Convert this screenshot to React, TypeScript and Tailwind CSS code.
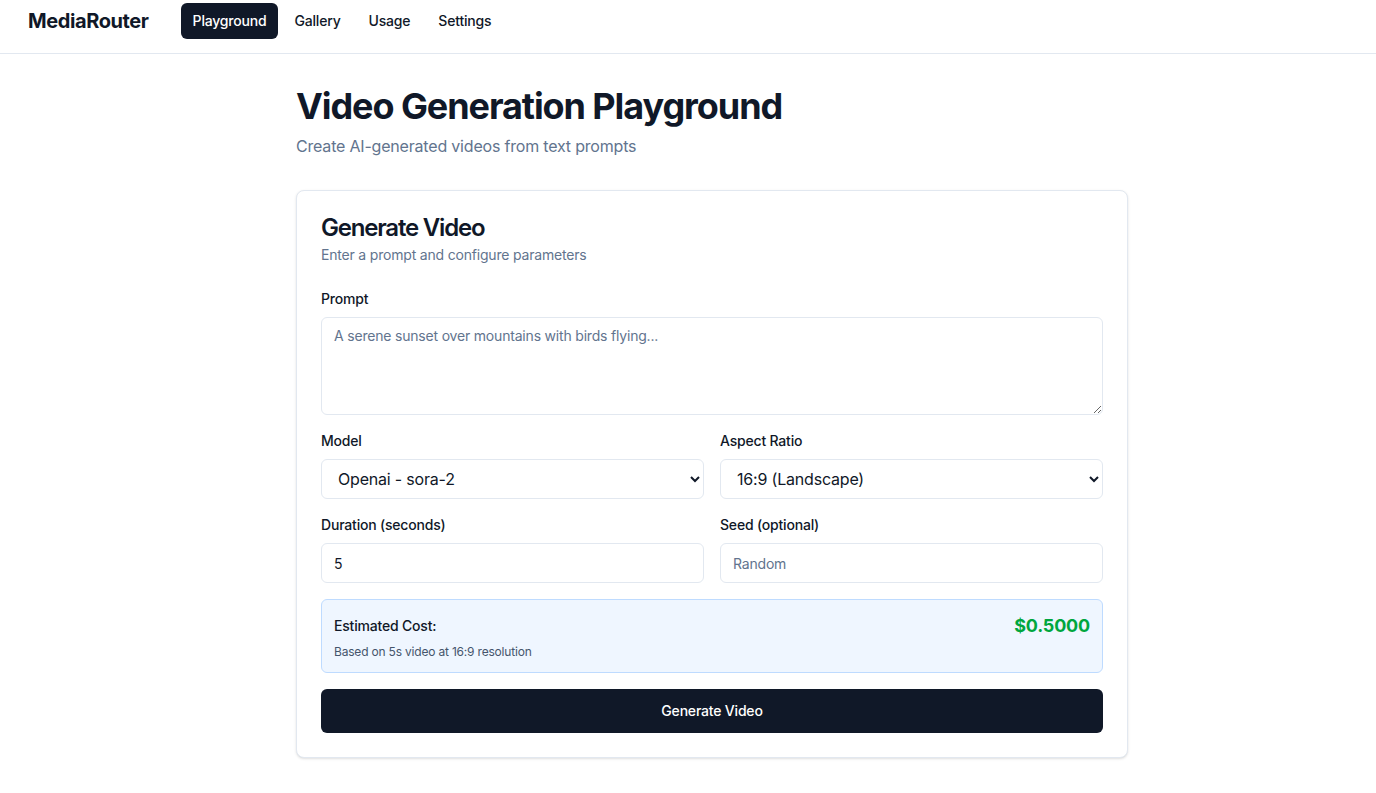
import React from 'react';

const navItems = ['Playground', 'Gallery', 'Usage', 'Settings'];

const App: React.FC = () => {
  return (
    <div className="min-h-screen bg-white font-['Inter',sans-serif] tracking-[-0.012em] text-gray-900">
      <nav className="flex items-center gap-8 border-b border-slate-200 pl-7 pt-[3px] pb-[14px]">
        <span className="text-xl font-bold tracking-[-0.02em]">MediaRouter</span>
        <div className="flex gap-1">
          {navItems.map((item, i) => (
            <a
              key={item}
              href="#"
              className={
                i === 0
                  ? 'rounded-md bg-gray-900 px-3 py-2 text-sm font-medium text-white'
                  : 'rounded-md px-3 py-2 text-sm font-medium text-gray-900'
              }
            >
              {item}
            </a>
          ))}
        </div>
      </nav>

      <main className="ml-[296px] w-[832px] py-8">
        <h1 className="text-4xl font-bold tracking-[-0.03em]">Video Generation Playground</h1>
        <p className="mt-2 mb-8 text-base text-slate-500">Create AI-generated videos from text prompts</p>

        <div className="rounded-lg border border-slate-200 bg-white shadow-sm">
          <div className="flex flex-col gap-1 p-6">
            <h2 className="text-2xl leading-[26px] font-semibold tracking-[-0.05em]">Generate Video</h2>
            <p className="text-sm text-slate-500">Enter a prompt and configure parameters</p>
          </div>

          <form className="space-y-4 px-6 pb-6" onSubmit={(e) => e.preventDefault()}>
            <div className="space-y-2">
              <label htmlFor="prompt" className="block text-sm font-medium">Prompt</label>
              <textarea
                id="prompt"
                placeholder="A serene sunset over mountains with birds flying..."
                className="block h-[98px] w-full rounded-md border border-slate-200 px-3 py-2 text-sm placeholder:text-slate-500 focus:outline-none"
              />
            </div>

            <div className="grid grid-cols-2 gap-4">
              <div className="space-y-2">
                <label htmlFor="model" className="block text-sm font-medium">Model</label>
                <select
                  id="model"
                  className="block h-10 w-full rounded-md border border-slate-200 px-3 text-base"
                >
                  <option>Openai - sora-2</option>
                </select>
              </div>
              <div className="space-y-2">
                <label htmlFor="aspect" className="block text-sm font-medium">Aspect Ratio</label>
                <select
                  id="aspect"
                  className="block h-10 w-full rounded-md border border-slate-200 px-3 text-base"
                >
                  <option>16:9 (Landscape)</option>
                </select>
              </div>
            </div>

            <div className="grid grid-cols-2 gap-4">
              <div className="space-y-2">
                <label htmlFor="duration" className="block text-sm font-medium">Duration (seconds)</label>
                <input
                  id="duration"
                  type="number"
                  defaultValue={5}
                  className="block h-10 w-full rounded-md border border-slate-200 px-3 text-sm focus:outline-none [appearance:textfield] [&::-webkit-inner-spin-button]:appearance-none"
                />
              </div>
              <div className="space-y-2">
                <label htmlFor="seed" className="block text-sm font-medium">Seed (optional)</label>
                <input
                  id="seed"
                  type="text"
                  placeholder="Random"
                  className="block h-10 w-full rounded-md border border-slate-200 px-3 text-sm placeholder:text-slate-500 focus:outline-none"
                />
              </div>
            </div>

            <div className="rounded-md border border-blue-200 bg-blue-50 p-3">
              <div className="flex items-center justify-between">
                <span className="text-sm font-medium">Estimated Cost:</span>
                <span className="text-lg font-bold text-green-600">$0.5000</span>
              </div>
              <p className="mt-1 text-xs text-slate-600">Based on 5s video at 16:9 resolution</p>
            </div>

            <button
              type="submit"
              className="w-full rounded-md bg-gray-900 py-3 text-sm font-medium text-white"
            >
              Generate Video
            </button>
          </form>
        </div>
      </main>
    </div>
  );
};

export default App;
